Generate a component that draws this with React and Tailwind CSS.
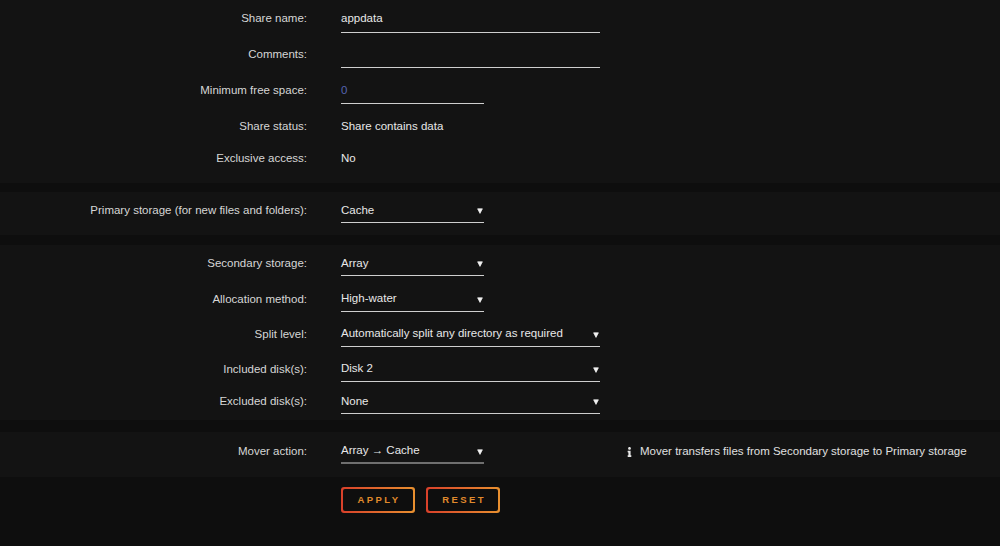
import React from "react";
import { FaInfo } from "react-icons/fa";

function Arrow() {
  return (
    <svg width="6" height="6" viewBox="0 0 6 6" className="shrink-0 mt-[1px]">
      <path d="M0.6 0.8 H5.4 L3 5.4 Z" fill="#f2f2f2" stroke="#f2f2f2" strokeWidth="0.7" strokeLinejoin="round" />
    </svg>
  );
}

function Row({ label, h, children, extra }) {
  return (
    <div className={`flex items-center ${h}`}>
      <div className="w-[307px] text-right text-[#d6d6d6] shrink-0 pt-[2px]">{label}</div>
      <div className="ml-[34px] flex items-center">{children}</div>
      {extra}
    </div>
  );
}

function TextInput({ value, w, color = "text-[#e8e8e8]", h = "h-[28px]" }) {
  return (
    <div className={`${w} ${h} flex items-center pt-[2px] border-b border-[#cfcfcf] ${color}`}>
      {value}
    </div>
  );
}

function Select({ value, w, border = "border-b border-[#cfcfcf]", h = "h-[26px]" }) {
  return (
    <div className={`${w} ${h} flex items-center justify-between pt-[2px] pr-[1px] ${border} text-[#e8e8e8]`}>
      <span>{value}</span>
      <Arrow />
    </div>
  );
}

function Button({ children }) {
  return (
    <div className="w-[74px] h-[26px] rounded-[3px] p-[2px] bg-[linear-gradient(90deg,#d8402a,#e8902f)]">
      <div className="w-full h-full rounded-[2px] bg-[#0e0e0e] flex items-center justify-center text-[9.5px] font-bold tracking-[2.4px] text-[#e08a2c] pl-[2px]">
        {children}
      </div>
    </div>
  );
}

export default function App() {
  return (
    <div className="w-[1000px] h-[546px] bg-[#0e0e0e] font-['Liberation_Sans',Arial,sans-serif] text-[11.5px] overflow-hidden">
      <div className="h-[183px] bg-[#131313]">
        <Row label="Share name:" h="h-[36px]">
          <TextInput value="appdata" w="w-[259px]" h="h-[29px]" />
        </Row>
        <Row label="Comments:" h="h-[36px]">
          <TextInput value="" w="w-[259px]" />
        </Row>
        <Row label="Minimum free space:" h="h-[36px]">
          <TextInput value="0" w="w-[143px]" color="text-[#5563b0]" h="h-[27px]" />
        </Row>
        <Row label="Share status:" h="h-[36px]">
          <span className="text-[#e8e8e8] pt-[2px]">Share contains data</span>
        </Row>
        <Row label="Exclusive access:" h="h-[28px]">
          <span className="text-[#e8e8e8] pt-[2px]">No</span>
        </Row>
      </div>
      <div className="h-[9px]" />
      <div className="h-[43px] bg-[#131313]">
        <Row label="Primary storage (for new files and folders):" h="h-[36px]">
          <Select value="Cache" w="w-[143px]" />
        </Row>
      </div>
      <div className="h-[10px]" />
      <div className="h-[175px] bg-[#131313]">
        <Row label="Secondary storage:" h="h-[36px]">
          <Select value="Array" w="w-[143px]" />
        </Row>
        <Row label="Allocation method:" h="h-[35px]">
          <Select value="High-water" w="w-[143px]" />
        </Row>
        <Row label="Split level:" h="h-[35px]">
          <Select value="Automatically split any directory as required" w="w-[259px]" />
        </Row>
        <Row label="Included disk(s):" h="h-[35px]">
          <Select value="Disk 2" w="w-[259px]" />
        </Row>
        <Row label="Excluded disk(s):" h="h-[30px]">
          <Select value="None" w="w-[259px]" />
        </Row>
      </div>
      <div className="h-[12px]" />
      <div className="h-[45px] bg-[#131313]">
        <Row
          label="Mover action:"
          h="h-[38px]"
          extra={
            <div className="ml-[141px] flex items-center pt-[2px] text-[#e0e0e0]">
              <FaInfo className="w-[9px] h-[10px] text-[#e6e6e6] mr-[6px]" />
              <span>Mover transfers files from Secondary storage to Primary storage</span>
            </div>
          }
        >
          <Select value="Array → Cache" w="w-[143px]" border="border-b-2 border-[#6f6f6f]" />
        </Row>
      </div>
      <div className="mt-[10px] ml-[341px] flex gap-[11px]">
        <Button>APPLY</Button>
        <Button>RESET</Button>
      </div>
    </div>
  );
}
